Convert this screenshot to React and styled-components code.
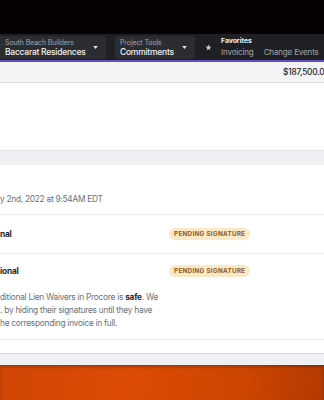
import React from "react";
import styled, { createGlobalStyle } from "styled-components";

const Global = createGlobalStyle`
  html, body { margin: 0; padding: 0; }
  body {
    width: 324px; height: 400px; overflow: hidden;
    font-family: Inter, "Noto Sans", "Liberation Sans", sans-serif;
    background: #ffffff;
  }
`;

const Page = styled.div`
  width: 324px;
  height: 400px;
  display: flex;
  flex-direction: column;
  overflow: hidden;
`;

const TopBlack = styled.div`
  height: 34px;
  background: #060203;
  flex: none;
`;

const NavBar = styled.div`
  height: 26px;
  background: #1f2023;
  border-bottom: 2px solid #5e50c4;
  display: flex;
  align-items: center;
  flex: none;
  white-space: nowrap;
`;

const Dropdown = styled.div`
  height: 23px;
  width: ${(p) => p.$w}px;
  margin-left: ${(p) => p.$ml}px;
  background: #2c2d31;
  border-radius: ${(p) => (p.$flatLeft ? "0 3px 3px 0" : "3px")};
  box-sizing: border-box;
  padding: 0 8px 0 5px;
  display: flex;
  align-items: center;
  justify-content: space-between;
`;

const DropText = styled.div`
  display: flex;
  flex-direction: column;
  line-height: 1;
  padding-top: 1px;
`;

const DropLabel = styled.span`
  font-size: 7px;
  letter-spacing: -0.1px;
  color: #a3a6ab;
  margin-bottom: 2.5px;
`;

const DropValue = styled.span`
  font-size: 8.5px;
  letter-spacing: -0.25px;
  font-weight: 500;
  color: #f2f2f3;
`;

const Caret = styled.svg`
  width: 5px;
  height: 3px;
  flex: none;
`;

const StarIcon = styled.svg`
  width: 7px;
  height: 7px;
  margin-left: 10px;
  flex: none;
`;

const Favorites = styled.div`
  margin-left: 9px;
  display: flex;
  flex-direction: column;
  line-height: 1;
`;

const FavTitle = styled.span`
  font-size: 6.8px;
  font-weight: 700;
  color: #f4f4f5;
  margin-bottom: 4px;
`;

const FavLinks = styled.div`
  display: flex;
  gap: 10px;
`;

const FavLink = styled.span`
  font-size: 8px;
  letter-spacing: -0.15px;
  color: #a4a7ac;
`;

const SubBar = styled.div`
  height: 20px;
  background: #f4f4f6;
  border-bottom: 1px solid #dfe0e3;
  display: flex;
  align-items: center;
  flex: none;
  white-space: nowrap;
`;

const Amount = styled.span`
  margin-left: 283px;
  font-size: 8.3px;
  letter-spacing: -0.2px;
  font-weight: 500;
  color: #232429;
`;

const WhitePanel = styled.div`
  height: 67px;
  background: #ffffff;
  flex: none;
`;

const Gap = styled.div`
  height: ${(p) => p.$h}px;
  background: #eef0f3;
  border-top: 1px solid ${(p) => p.$line};
  box-sizing: border-box;
  flex: none;
`;

const Card = styled.div`
  height: 188px;
  background: #ffffff;
  flex: none;
  display: flex;
  flex-direction: column;
  white-space: nowrap;
`;

const DateLine = styled.div`
  height: 50px;
  box-sizing: border-box;
  padding-top: 28px;
  font-size: 8.3px;
  letter-spacing: -0.25px;
  color: #6b6f76;
  border-bottom: 1px solid #e6e8eb;
  line-height: 12px;
`;

const Row = styled.div`
  height: ${(p) => p.$h}px;
  box-sizing: border-box;
  display: flex;
  align-items: center;
  padding-bottom: ${(p) => (p.$last ? 3 : 0)}px;
  border-bottom: ${(p) => (p.$last ? "none" : "1px solid #e6e8eb")};
`;

const RowName = styled.span`
  width: 169px;
  font-size: 8.3px;
  letter-spacing: -0.2px;
  font-weight: 700;
  color: #26272b;
`;

const Badge = styled.span`
  height: 12px;
  padding: 0 5px;
  border-radius: 6px;
  background: #fbe8c6;
  color: #8d5b21;
  font-size: 6.3px;
  font-weight: 700;
  letter-spacing: 0.3px;
  display: inline-flex;
  align-items: center;
`;

const Para = styled.div`
  padding-top: 1px;
  font-size: 8.3px;
  letter-spacing: -0.25px;
  line-height: 12.8px;
  color: #6b6f76;
  height: 50px;
  border-bottom: 1px solid #e6e8eb;
  box-sizing: border-box;
  b { font-weight: 700; color: #2a2b30; }
`;

const Orange = styled.div`
  flex: 1;
  background: linear-gradient(100deg, #d14605 0%, #dc4c04 40%, #cd4500 75%, #b33a02 100%);
  box-shadow: inset 0 2px 3px rgba(0, 0, 0, 0.25);
`;

const CaretSvg = () => (
  <Caret viewBox="0 0 6 4">
    <path d="M0 0 L6 0 L3 4 Z" fill="#e8e8ea" />
  </Caret>
);

export default function App() {
  return (
    <Page>
      <Global />
      <TopBlack />
      <NavBar>
        <Dropdown $w={106} $ml={0} $flatLeft>
          <DropText>
            <DropLabel>South Beach Builders</DropLabel>
            <DropValue>Baccarat Residences</DropValue>
          </DropText>
          <CaretSvg />
        </Dropdown>
        <Dropdown $w={80} $ml={9}>
          <DropText>
            <DropLabel>Project Tools</DropLabel>
            <DropValue>Commitments</DropValue>
          </DropText>
          <CaretSvg />
        </Dropdown>
        <StarIcon viewBox="0 0 24 24">
          <path
            d="M12 2l2.9 6.6 7.1.6-5.4 4.7 1.6 7.1L12 17.3 5.8 21l1.6-7.1L2 9.2l7.1-.6z"
            fill="#c9cacd"
          />
        </StarIcon>
        <Favorites>
          <FavTitle>Favorites</FavTitle>
          <FavLinks>
            <FavLink>Invoicing</FavLink>
            <FavLink>Change Events</FavLink>
          </FavLinks>
        </Favorites>
      </NavBar>
      <SubBar>
        <Amount>$187,500.00</Amount>
      </SubBar>
      <WhitePanel />
      <Gap $h={15} $line="#e0e2e6" />
      <Card>
        <DateLine>y 2nd, 2022 at 9:54AM EDT</DateLine>
        <Row $h={39}>
          <RowName>nal</RowName>
          <Badge>PENDING SIGNATURE</Badge>
        </Row>
        <Row $h={36} $last>
          <RowName>ional</RowName>
          <Badge>PENDING SIGNATURE</Badge>
        </Row>
        <Para>
          ditional Lien Waivers in Procore is <b>safe</b>. We
          <br />
          . by hiding their signatures until they have
          <br />
          he corresponding invoice in full.
        </Para>
      </Card>
      <Gap $h={12} $line="#d6d9db" />
      <Orange />
    </Page>
  );
}
